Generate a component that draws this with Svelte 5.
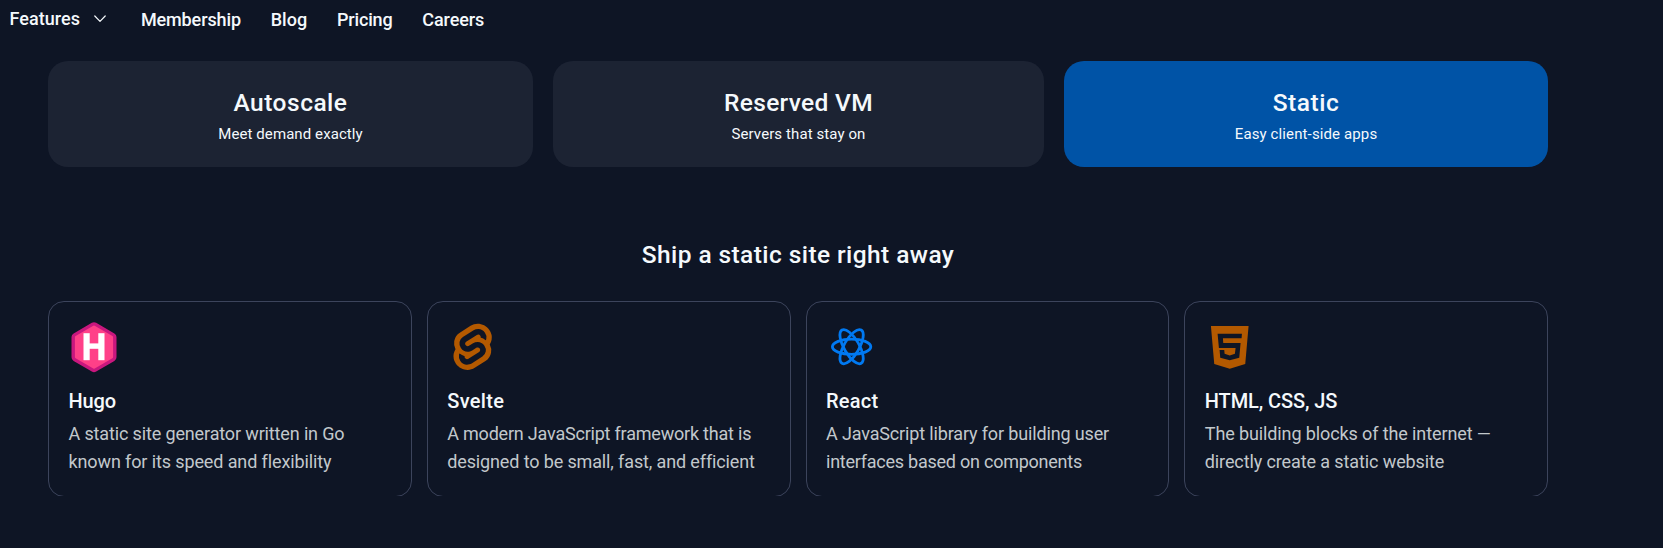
<script>
  const nav = [
    { label: 'Membership', width: 100 },
    { label: 'Blog', width: 36.5 },
    { label: 'Pricing', width: 55.5 },
    { label: 'Careers', width: 62 }
  ];

  const tabs = [
    { title: 'Autoscale', tw: 114, sub: 'Meet demand exactly', sw: 144.5, grow: 485 },
    { title: 'Reserved VM', tw: 149, sub: 'Servers that stay on', sw: 134, grow: 491 },
    { title: 'Static', tw: 66.5, sub: 'Easy client-side apps', sw: 142.5, grow: 484, active: true }
  ];

  const cards = [
    { icon: 'hugo', title: 'Hugo', tw: 47.5, lines: [['A static site generator written in Go', 276], ['known for its speed and flexibility', 262.5]] },
    { icon: 'svelte', title: 'Svelte', tw: 57, lines: [['A modern JavaScript framework that is', 304], ['designed to be small, fast, and efficient', 306]] },
    { icon: 'react', title: 'React', tw: 52.5, lines: [['A JavaScript library for building user', 283], ['interfaces based on components', 256]] },
    { icon: 'html', title: 'HTML, CSS, JS', tw: 132.5, lines: [['The building blocks of the internet —', 286], ['directly create a static website', 239.5]] }
  ];

  // Tracks a line of text so that it sets to the given measure.
  function measure(node, width) {
    const natural = node.getBoundingClientRect().width;
    node.style.letterSpacing = `${(width - natural) / node.textContent.length}px`;
  }
</script>

<nav class="nav">
  <a class="features" href="#features">
    <span use:measure={70.5}>Features</span>
    <svg width="12" height="8" viewBox="0 0 12 8" fill="none" stroke="currentColor" stroke-width="1.2" stroke-linecap="round" stroke-linejoin="round"><path d="M.8 1 6 6.4 11.2 1" /></svg>
  </a>
  {#each nav as item}
    <a href="#{item.label.toLowerCase()}"><span use:measure={item.width}>{item.label}</span></a>
  {/each}
</nav>

<main>
  <div class="tabs">
    {#each tabs as tab}
      <button class="tab" class:active={tab.active} style:flex-grow={tab.grow}>
        <span class="tab-title"><span use:measure={tab.tw}>{tab.title}</span></span>
        <span class="tab-sub"><span use:measure={tab.sw}>{tab.sub}</span></span>
      </button>
    {/each}
  </div>

  <h2><span use:measure={312.5}>Ship a static site right away</span></h2>

  <div class="cards">
    {#each cards as card}
      <article class="card">
        <svg class="icon" width="52" height="52" viewBox="0 0 52 52">
          {#if card.icon === 'hugo'}
            <g transform="translate(.5 .2)">
              <path d="M24.5 4.3 42.7 14.9V35.1L24.5 45.7 6.3 35.1V14.9Z" fill="#c9177e" stroke="#c9177e" stroke-width="8.6" stroke-linejoin="round" />
              <path d="M24.5 4.8 42.2 15.1V34.9L24.5 45.2 6.8 34.9V15.1Z" fill="#ff4088" stroke="#ff4088" stroke-width="2.8" stroke-linejoin="round" />
              <g fill="#fff">
                <rect x="14" y="11" width="6.2" height="27" />
                <rect x="28.8" y="11" width="6.2" height="27" />
                <rect x="19" y="21.2" width="11" height="5.4" />
              </g>
            </g>
          {:else if card.icon === 'svelte'}
            <path transform="translate(2.6 1.8) scale(1.92)" fill="#b35900" d="M10.354 21.125a4.44 4.44 0 0 1-4.765-1.767 4.109 4.109 0 0 1-.703-3.107 3.898 3.898 0 0 1 .134-.522l.105-.321.287.21a7.21 7.21 0 0 0 2.186 1.092l.208.063-.02.208a1.253 1.253 0 0 0 .226.83 1.337 1.337 0 0 0 1.435.533 1.231 1.231 0 0 0 .343-.15l5.59-3.562a1.164 1.164 0 0 0 .524-.778 1.242 1.242 0 0 0-.211-.937 1.338 1.338 0 0 0-1.435-.533 1.23 1.23 0 0 0-.343.15l-2.133 1.36a4.078 4.078 0 0 1-1.135.499 4.44 4.44 0 0 1-4.765-1.766 4.108 4.108 0 0 1-.702-3.108 3.855 3.855 0 0 1 1.742-2.582l5.589-3.563a4.072 4.072 0 0 1 1.135-.499 4.44 4.44 0 0 1 4.765 1.767 4.109 4.109 0 0 1 .703 3.107 3.943 3.943 0 0 1-.134.522l-.105.321-.286-.21a7.204 7.204 0 0 0-2.187-1.093l-.208-.063.02-.207a1.255 1.255 0 0 0-.226-.831 1.337 1.337 0 0 0-1.435-.532 1.231 1.231 0 0 0-.343.15L8.62 9.368a1.162 1.162 0 0 0-.524.778 1.24 1.24 0 0 0 .211.937 1.338 1.338 0 0 0 1.435.533 1.235 1.235 0 0 0 .344-.151l2.132-1.36a4.067 4.067 0 0 1 1.135-.498 4.44 4.44 0 0 1 4.765 1.766 4.108 4.108 0 0 1 .702 3.108 3.857 3.857 0 0 1-1.742 2.583l-5.589 3.562a4.072 4.072 0 0 1-1.135.499m10.358-17.95C18.484-.015 14.082-.96 10.9 1.068L5.31 4.63a6.412 6.412 0 0 0-2.896 4.295 6.753 6.753 0 0 0 .666 4.336 6.43 6.43 0 0 0-.96 2.396 6.833 6.833 0 0 0 1.168 5.167c2.229 3.19 6.63 4.135 9.812 2.108l5.59-3.562a6.41 6.41 0 0 0 2.896-4.295 6.756 6.756 0 0 0-.665-4.336 6.429 6.429 0 0 0 .958-2.396 6.831 6.831 0 0 0-1.167-5.168Z" />
          {:else if card.icon === 'react'}
            <g transform="translate(25.6 24.7)" fill="none" stroke="#0079f2" stroke-width="2.8">
              <ellipse rx="19.2" ry="7.6" />
              <ellipse rx="19.2" ry="7.6" transform="rotate(60)" />
              <ellipse rx="19.2" ry="7.6" transform="rotate(120)" />
            </g>
          {:else}
            <path transform="translate(-34.75 -32) scale(.33333)" fill="#b35900" fill-rule="evenodd" d="M122 108H235L225 222 178.500 236 132 222ZM142 131 146 174H196L194 191 178.500 196.500 163 191 162 180H148L150 203 178.500 211 207 203 211 159H159L158 145H214L215 131Z" />
          {/if}
        </svg>
        <h3><span use:measure={card.tw}>{card.title}</span></h3>
        <p>
          {#each card.lines as [text, width]}
            <span class="line"><span use:measure={width}>{text}</span></span>
          {/each}
        </p>
      </article>
    {/each}
  </div>
</main>

<style>
  :global(body) {
    background: #0e1525;
    color: #f5f9fc;
    font-family: Roboto, "Noto Sans", sans-serif;
    overflow: hidden;
  }

  .nav {
    display: flex;
    align-items: flex-start;
    gap: 29.8px;
    height: 52px;
    padding: 9px 0 0 9.5px;
    box-sizing: border-box;
    white-space: nowrap;
  }

  .nav a {
    color: inherit;
    text-decoration: none;
    font-size: 18px;
    font-weight: 500;
    line-height: 22px;
  }

  .nav .features {
    display: flex;
    align-items: center;
    gap: 13.5px;
    margin: -1px 5.6px 0 0;
  }

  main {
    width: 1500px;
    padding: 9px 0 0 48px;
  }

  .tabs {
    display: flex;
    gap: 20px;
  }

  .tab {
    display: flex;
    flex: 1 1 0;
    flex-direction: column;
    align-items: center;
    gap: 5px;
    height: 106px;
    padding: 27px 0 0;
    border: 0;
    border-radius: 20px;
    background: #1c2333;
    color: inherit;
    font-family: inherit;
    white-space: nowrap;
    justify-content: flex-start;
  }

  .tab.active {
    background: #0053a6;
  }

  .tab-title {
    font-size: 24.5px;
    font-weight: 500;
    line-height: 30px;
  }

  .tab-sub {
    font-size: 15px;
    line-height: 22px;
  }

  h2 {
    margin: 73px 0 31px;
    font-size: 24.5px;
    font-weight: 500;
    line-height: 30px;
    text-align: center;
  }

  .cards {
    display: grid;
    grid-template-columns: repeat(4, 1fr);
    gap: 15px;
    height: 195px;
    overflow: hidden;
  }

  .card {
    height: 196px;
    padding: 20px 20px 20px 19.5px;
    box-sizing: border-box;
    border: 1px solid #3c445c;
    border-radius: 16px;
    white-space: nowrap;
  }

  .icon {
    display: block;
    overflow: visible;
  }

  h3 {
    margin: 14px 0 6px;
    font-size: 20px;
    font-weight: 500;
    line-height: 26px;
  }

  p {
    margin: 0;
    color: #c2c8cc;
    font-size: 18px;
    line-height: 28px;
  }

  .line {
    display: block;
  }
</style>
